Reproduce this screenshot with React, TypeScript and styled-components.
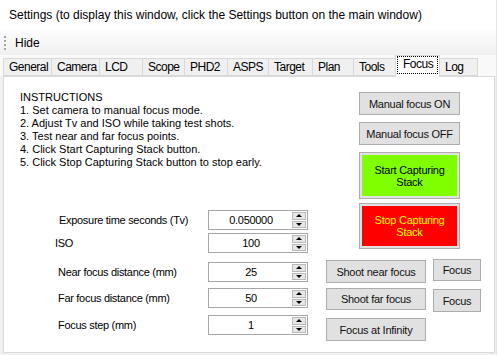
import React from 'react';
import styled, { createGlobalStyle } from 'styled-components';

const GlobalStyle = createGlobalStyle`
  html, body {
    margin: 0;
    padding: 0;
    background: #fff;
  }
  body {
    font-family: "Liberation Sans", Arial, sans-serif;
    color: #000;
  }
`;

const Window = styled.div`
  width: 497px;
  height: 355px;
  box-sizing: border-box;
  border-right: 1px solid #e3e3e3;
  background: #f0f0f0;
  display: flex;
  flex-direction: column;
  overflow: hidden;
`;

const TitleBar = styled.div`
  height: 30px;
  flex: none;
  background: #fff;
  display: flex;
  align-items: center;
  padding-left: 9px;
  font-size: 12px;
`;

const Toolbar = styled.div`
  height: 25px;
  flex: none;
  display: flex;
  align-items: center;
  background: linear-gradient(#fdfdfd, #f0f0f0);
  font-size: 12px;
`;

const Grip = styled.span`
  width: 0;
  height: 14px;
  margin: 0 9px 0 4px;
  border-left: 2px dotted #a5a5a5;
`;

const TabStrip = styled.div`
  height: 21px;
  flex: none;
  display: flex;
  align-items: flex-end;
  padding-left: 3px;
  position: relative;
  z-index: 1;
  background: #f9f9f9;
`;

const Tab = styled.div<{ $w: number; $active?: boolean }>`
  box-sizing: border-box;
  width: ${({ $w }) => $w}px;
  height: ${({ $active }) => ($active ? 22 : 18)}px;
  margin-right: -1px;
  margin-bottom: ${({ $active }) => ($active ? -1 : 0)}px;
  border: 1px solid #d9d9d9;
  border-bottom: ${({ $active }) => ($active ? 'none' : '1px solid #d9d9d9')};
  background: ${({ $active }) => ($active ? '#fff' : '#f0f0f0')};
  position: relative;
  z-index: ${({ $active }) => ($active ? 2 : 1)};
  font-size: 12px;
  letter-spacing: -0.5px;
  line-height: 16px;
  padding: ${({ $active }) => ($active ? '0 1px' : '0 0 0 5px')};
  white-space: nowrap;
`;

const FocusRing = styled.span`
  display: block;
  height: 18px;
  box-sizing: border-box;
  border: 1px dotted #000;
  padding-left: 5px;
  line-height: 15px;
`;

const Panel = styled.div`
  box-sizing: border-box;
  width: 492px;
  height: 277px;
  margin-left: 3px;
  flex: none;
  border: 1px solid #d9d9d9;
  background: #fff;
  display: flex;
  flex-direction: column;
`;

const TopSection = styled.div`
  display: flex;
`;

const LeftCol = styled.div`
  width: 355px;
  display: flex;
  flex-direction: column;
`;

const RightCol = styled.div`
  width: 100px;
  padding-top: 15px;
  display: flex;
  flex-direction: column;
`;

const Instructions = styled.div`
  margin: 14px 0 0 16px;
  font-size: 11px;
  line-height: 13px;
  white-space: nowrap;
`;

const FieldRow = styled.div<{ $mt: number }>`
  display: flex;
  align-items: flex-start;
  height: 20px;
  margin-top: ${({ $mt }) => $mt}px;
`;

const Label = styled.div<{ $indent?: number }>`
  box-sizing: border-box;
  width: 204px;
  padding-left: ${({ $indent }) => $indent ?? 54}px;
  font-size: 11px;
  line-height: 20px;
  letter-spacing: -0.3px;
  white-space: nowrap;
`;

const NumberBox = styled.div`
  box-sizing: border-box;
  width: 100px;
  height: 20px;
  border: 1px solid #a7a7a7;
  background: #fff;
  display: flex;
`;

const Value = styled.div`
  flex: 1;
  text-align: center;
  font-size: 11px;
  line-height: 18px;
  letter-spacing: -0.3px;
  padding-left: 1px;
`;

const Spinner = styled.div`
  width: 14px;
  margin: 1px 1px 1px 0;
  display: flex;
  flex-direction: column;
  gap: 1px;
`;

const SpinHalf = styled.div<{ $down?: boolean }>`
  flex: 1;
  background: #e6e6e6;
  border: 1px solid #b9b9b9;
  display: flex;
  align-items: center;
  justify-content: center;

  &::after {
    content: '';
    border-left: 3px solid transparent;
    border-right: 3px solid transparent;
    ${({ $down }) => ($down ? 'border-top: 3px solid #000;' : 'border-bottom: 3px solid #000;')}
  }
`;

const WinButton = styled.button<{ $w: number; $h: number; $mt?: number; $ml?: number }>`
  box-sizing: border-box;
  flex: none;
  width: ${({ $w }) => $w}px;
  height: ${({ $h }) => $h}px;
  margin-top: ${({ $mt }) => $mt ?? 0}px;
  margin-left: ${({ $ml }) => $ml ?? 0}px;
  padding: 0;
  border: 1px solid #adadad;
  background: #e1e1e1;
  font-family: "Liberation Sans", Arial, sans-serif;
  font-size: 11px;
  letter-spacing: -0.25px;
  color: #111;
  white-space: nowrap;
`;

const ColorButton = styled(WinButton)`
  padding: 2px;
  display: flex;
`;

const Fill = styled.span<{ $bg: string; $fg: string }>`
  flex: 1;
  display: flex;
  align-items: center;
  justify-content: center;
  text-align: center;
  white-space: normal;
  line-height: 12px;
  background: ${({ $bg }) => $bg};
  color: ${({ $fg }) => $fg};
`;

const tabs = [
  { name: 'General', w: 49 },
  { name: 'Camera', w: 49 },
  { name: 'LCD', w: 44 },
  { name: 'Scope', w: 43 },
  { name: 'PHD2', w: 44 },
  { name: 'ASPS', w: 42 },
  { name: 'Target', w: 45 },
  { name: 'Plan', w: 42 },
  { name: 'Tools', w: 43 },
  { name: 'Focus', w: 45 },
  { name: 'Log', w: 39 },
];

const NumberField = ({ value }: { value: string }) => (
  <NumberBox>
    <Value>{value}</Value>
    <Spinner>
      <SpinHalf />
      <SpinHalf $down />
    </Spinner>
  </NumberBox>
);

export default function App() {
  return (
    <>
      <GlobalStyle />
      <Window>
        <TitleBar>Settings (to display this window, click the Settings button on the main window)</TitleBar>
        <Toolbar>
          <Grip />
          Hide
        </Toolbar>
        <TabStrip>
          {tabs.map((t) =>
            t.name === 'Focus' ? (
              <Tab key={t.name} $w={t.w} $active>
                <FocusRing>{t.name}</FocusRing>
              </Tab>
            ) : (
              <Tab key={t.name} $w={t.w}>
                {t.name}
              </Tab>
            )
          )}
        </TabStrip>
        <Panel>
          <TopSection>
            <LeftCol>
              <Instructions>
                INSTRUCTIONS
                <br />
                1. Set camera to manual focus mode.
                <br />
                2. Adjust Tv and ISO while taking test shots.
                <br />
                3. Test near and far focus points.
                <br />
                4. Click Start Capturing Stack button.
                <br />
                5. Click Stop Capturing Stack button to stop early.
              </Instructions>
              <FieldRow $mt={41}>
                <Label $indent={55}>Exposure time seconds (Tv)</Label>
                <NumberField value="0.050000" />
              </FieldRow>
              <FieldRow $mt={3}>
                <Label $indent={51}>ISO</Label>
                <NumberField value="100" />
              </FieldRow>
            </LeftCol>
            <RightCol>
              <WinButton $w={101} $h={23}>Manual focus ON</WinButton>
              <WinButton $w={101} $h={23} $mt={7}>Manual focus OFF</WinButton>
              <ColorButton $w={101} $h={47} $mt={7}>
                <Fill $bg="#80ff00" $fg="#000">Start Capturing<br />Stack</Fill>
              </ColorButton>
              <ColorButton $w={101} $h={46} $mt={4}>
                <Fill $bg="#ff0000" $fg="#ffff00">Stop Capturing<br />Stack</Fill>
              </ColorButton>
            </RightCol>
          </TopSection>
          <FieldRow $mt={9}>
            <Label>Near focus distance (mm)</Label>
            <NumberField value="25" />
            <WinButton $w={100} $h={23} $mt={-2} $ml={18}>Shoot near focus</WinButton>
            <WinButton $w={48} $h={22} $mt={-3} $ml={7}>Focus</WinButton>
          </FieldRow>
          <FieldRow $mt={6}>
            <Label>Far focus distance (mm)</Label>
            <NumberField value="50" />
            <WinButton $w={100} $h={22} $mt={0} $ml={18}>Shoot far focus</WinButton>
            <WinButton $w={48} $h={23} $mt={1} $ml={7}>Focus</WinButton>
          </FieldRow>
          <FieldRow $mt={7}>
            <Label>Focus step (mm)</Label>
            <NumberField value="1" />
            <WinButton $w={100} $h={23} $mt={3} $ml={18}>Focus at Infinity</WinButton>
          </FieldRow>
        </Panel>
      </Window>
    </>
  );
}
